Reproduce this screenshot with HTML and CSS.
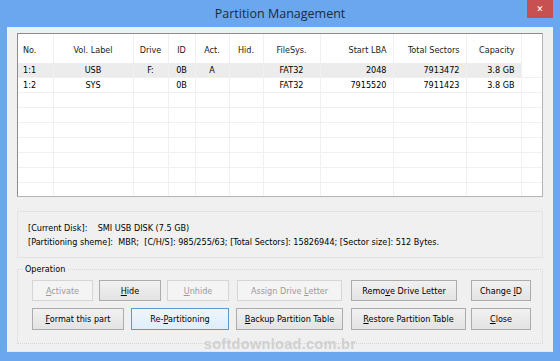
FILE: index.html
```html
<!DOCTYPE html>
<html>
<head>
    <meta charset="UTF-8">
    <title>Partition Management</title>
    <link rel="stylesheet" href="styles.css">
</head>
<body>
<div class="window">
    <div class="titlebar">
        <span class="title">Partition Management</span>
        <div class="close-btn">&#x2715;</div>
    </div>
    <div class="client">
        <div class="list-box">
            <table class="part-list">
                <colgroup>
                    <col class="c-no"><col class="c-label"><col class="c-drive"><col class="c-id">
                    <col class="c-act"><col class="c-hid"><col class="c-fs"><col class="c-lba">
                    <col class="c-total"><col class="c-cap"><col class="c-fill">
                </colgroup>
                <thead>
                    <tr>
                        <th class="left">No.</th>
                        <th>Vol. Label</th>
                        <th>Drive</th>
                        <th>ID</th>
                        <th>Act.</th>
                        <th>Hid.</th>
                        <th>FileSys.</th>
                        <th class="right">Start LBA</th>
                        <th class="right">Total Sectors</th>
                        <th class="right">Capacity</th>
                        <th class="fill"></th>
                    </tr>
                </thead>
                <tbody>
                    <tr class="selected">
                        <td class="left">1:1</td><td>USB</td><td>F:</td><td>0B</td><td>A</td><td></td><td>FAT32</td>
                        <td class="right">2048</td><td class="right">7913472</td><td class="right">3.8 GB</td><td class="fill"></td>
                    </tr>
                    <tr>
                        <td class="left">1:2</td><td>SYS</td><td></td><td>0B</td><td></td><td></td><td>FAT32</td>
                        <td class="right">7915520</td><td class="right">7911423</td><td class="right">3.8 GB</td><td class="fill"></td>
                    </tr>
                    <tr class="empty"><td></td><td></td><td></td><td></td><td></td><td></td><td></td><td></td><td></td><td></td><td class="fill"></td></tr>
                    <tr class="empty"><td></td><td></td><td></td><td></td><td></td><td></td><td></td><td></td><td></td><td></td><td class="fill"></td></tr>
                    <tr class="empty"><td></td><td></td><td></td><td></td><td></td><td></td><td></td><td></td><td></td><td></td><td class="fill"></td></tr>
                    <tr class="empty"><td></td><td></td><td></td><td></td><td></td><td></td><td></td><td></td><td></td><td></td><td class="fill"></td></tr>
                    <tr class="empty"><td></td><td></td><td></td><td></td><td></td><td></td><td></td><td></td><td></td><td></td><td class="fill"></td></tr>
                    <tr class="empty"><td></td><td></td><td></td><td></td><td></td><td></td><td></td><td></td><td></td><td></td><td class="fill"></td></tr>
                    <tr class="empty"><td></td><td></td><td></td><td></td><td></td><td></td><td></td><td></td><td></td><td></td><td class="fill"></td></tr>
                </tbody>
            </table>
        </div>

        <div class="info-box">
            <div>[Current Disk]:&nbsp;&nbsp;&nbsp; SMI USB DISK (7.5 GB)</div>
            <div>[Partitioning sheme]:&nbsp; MBR;&nbsp; [C/H/S]: 985/255/63; [Total Sectors]: 15826944; [Sector size]: 512 Bytes.</div>
        </div>

        <fieldset class="operation">
            <legend>Operation</legend>
            <div class="btn-row">
                <button class="btn disabled b-activate"><u>A</u>ctivate</button>
                <button class="btn b-hide"><u>H</u>ide</button>
                <button class="btn disabled b-unhide"><u>U</u>nhide</button>
                <button class="btn disabled b-assign">Assign Drive <u>L</u>etter</button>
                <button class="btn b-remove">Remo<u>v</u>e Drive Letter</button>
                <button class="btn b-change">Change <u>I</u>D</button>
            </div>
            <div class="btn-row">
                <button class="btn b-format"><u>F</u>ormat this part</button>
                <button class="btn default b-repart">Re-<u>P</u>artitioning</button>
                <button class="btn b-backup"><u>B</u>ackup Partition Table</button>
                <button class="btn b-restore"><u>R</u>estore Partition Table</button>
                <button class="btn b-close"><u>C</u>lose</button>
            </div>
        </fieldset>
    </div>
    <div class="watermark">softdownload.com.br</div>
</div>
</body>
</html>
```

FILE: styles.css
```css
body {
    margin: 0;
    background-color: #6aa7ee;
    font-family: "DejaVu Sans Condensed", "DejaVu Sans", sans-serif;
    font-stretch: condensed;
    font-size: 9px;
    color: #000;
}
.window {
    position: relative;
    width: 560px;
    height: 361px;
    background-color: #6aa7ee;
}
.titlebar {
    height: 27px;
    display: flex;
    justify-content: center;
    align-items: center;
    position: relative;
}
.title {
    font-family: "Open Sans", "Noto Sans", sans-serif;
    font-stretch: normal;
    font-size: 12.5px;
    color: #1b2b40;
    margin-top: -1px;
}
.close-btn {
    position: absolute;
    top: 0;
    right: 7px;
    width: 26px;
    height: 18px;
    background-color: #c75050;
    color: #fff;
    font-family: "DejaVu Sans", sans-serif;
    font-size: 9px;
    display: flex;
    justify-content: center;
    align-items: center;
}
.client {
    margin: 0 7px;
    height: 325px;
    background-color: #f0f0f0;
    padding: 6px 10px 0 10px;
    box-sizing: border-box;
    border-bottom: 1px solid #dfe9f5;
}

/* partition list */
.list-box {
    height: 164px;
    border: 1px solid #8c8c8c;
    border-right-color: #b5b5b5;
    border-bottom-color: #b5b5b5;
    background-color: #fff;
    overflow: hidden;
    box-sizing: border-box;
}
.part-list {
    border-collapse: collapse;
    table-layout: fixed;
    width: 524px;
}
.part-list th {
    height: 26px;
    font-weight: normal;
    text-align: center;
    padding: 3px 0 0 0;
    border-right: 1px solid #f0f0f0;
    color: #222;
}
.part-list td {
    height: 14px;
    padding: 0;
    text-align: center;
    border-right: 1px solid #f0f0f0;
    border-bottom: 1px solid #f0f0f0;
    white-space: nowrap;
}
.part-list .left { text-align: left; padding-left: 5px; }
.part-list .right { text-align: right; padding-right: 6px; }
.part-list .fill { border-right: none; }
.part-list tr.selected td { background-color: #ececec; }
.part-list tr.selected td.fill { background-color: #fff; }

.c-no { width: 35px; }
.c-label { width: 80px; }
.c-drive { width: 35px; }
.c-id { width: 27px; }
.c-act { width: 34px; }
.c-hid { width: 34px; }
.c-fs { width: 57px; }
.c-lba { width: 73px; }
.c-total { width: 73px; }
.c-cap { width: 55px; }
.c-fill { width: 21px; }

/* disk info */
.info-box {
    margin-top: 14px;
    height: 47px;
    border: 1px solid #e3e3e3;
    box-sizing: border-box;
    padding: 9px 0 0 10px;
    line-height: 14px;
}

/* operation group */
.operation {
    margin: 6px 0 0 0;
    padding: 6px 0 0 14px;
    height: 80px;
    box-sizing: border-box;
    border: 1px dotted #d6d6d6;
}
.operation legend {
    padding: 0 2px;
    margin-left: -9px;
}
.btn-row {
    display: flex;
    margin-bottom: 7px;
}
.btn {
    font-family: "DejaVu Sans Condensed", "DejaVu Sans", sans-serif;
    font-stretch: condensed;
    font-size: 9px;
    white-space: nowrap;
    height: 21px;
    padding: 0;
    margin: 0;
    color: #000;
    background: linear-gradient(#f1f1f1, #e3e3e3);
    border: 1px solid #acacac;
    box-sizing: border-box;
}
.btn.disabled {
    color: #9a9a9a;
    background: #f4f4f4;
    border-color: #d5d5d5;
}
.btn.default {
    border-color: #5b9bd5;
    background: linear-gradient(#eef6fc, #dfeefa);
}
.btn-row + .btn-row .btn { height: 22px; }

.b-activate { width: 61px; }
.b-hide { width: 62px; margin-left: 6px; }
.b-unhide { width: 62px; margin-left: 6px; }
.b-assign { width: 105px; margin-left: 8px; }
.b-remove { width: 106px; margin-left: 9px; }
.b-change { width: 60px; margin-left: 14px; }

.b-format { width: 92px; }
.b-repart { width: 98px; margin-left: 7px; }
.b-backup { width: 107px; margin-left: 7px; }
.b-restore { width: 115px; margin-left: 8px; }
.b-close { width: 60px; margin-left: 5px; }

.watermark {
    position: absolute;
    left: 0;
    right: 0;
    top: 336px;
    text-align: center;
    font-family: "Liberation Sans", Arial, sans-serif;
    font-weight: bold;
    font-size: 14.5px;
    letter-spacing: 0.3px;
    color: rgba(200, 200, 200, 0.8);
}
```
